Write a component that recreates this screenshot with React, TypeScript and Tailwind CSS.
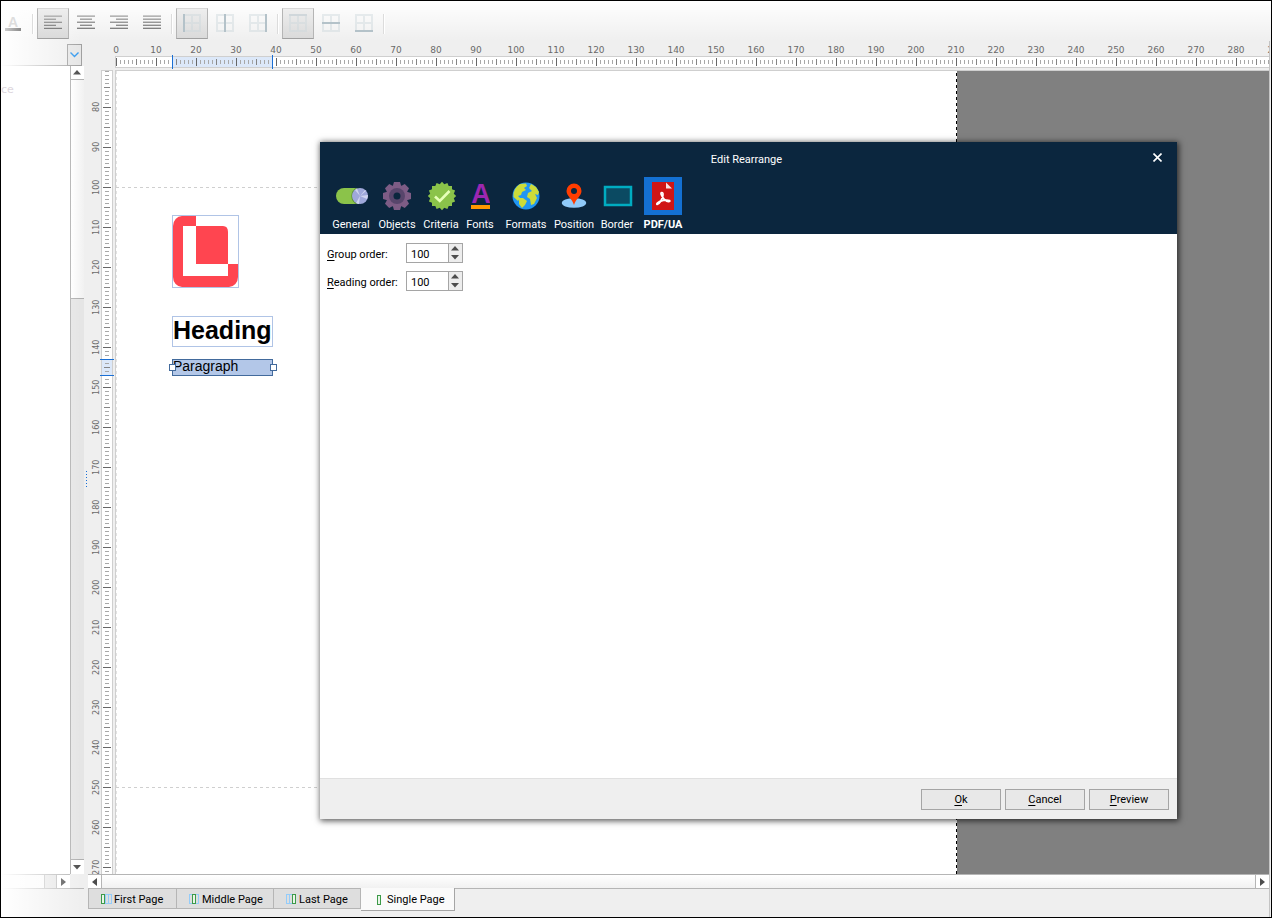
import type { ReactNode } from "react";
import clsx from "clsx";

const range = (start: number, count: number) =>
  Array.from({ length: count }, (_, i) => start + i * 10);

/* ===== Toolbar ===== */

function ToolButton({ label, pressed, children }: { label: string; pressed?: boolean; children: ReactNode }) {
  return (
    <button
      type="button"
      aria-label={label}
      aria-pressed={!!pressed}
      className={clsx(
        "flex h-[31px] w-8 justify-center border pt-[5px]",
        pressed ? "border-[#b5b5b5] border-t-[#d8d8d8] border-b-[#a0a0a0] bg-linear-to-b from-[#eeeeee] to-[#dadada]" : "border-transparent"
      )}
    >
      {children}
    </button>
  );
}

function Separator() {
  return (
    <div className="flex w-2 justify-center">
      <div className="h-5 w-0.5 border-r border-white bg-[#dcdcdc]" />
    </div>
  );
}

const lineTones = ["#b4b4b4", "#a6a6a6", "#989898", "#8c8c8c", "#808080"];

function AlignIcon({ kind }: { kind: "left" | "center" | "right" | "full" }) {
  return (
    <svg width="18" height="18" viewBox="0 0 18 18" shapeRendering="crispEdges">
      {lineTones.map((dark, i) => {
        const w = kind === "full" || i % 2 === 0 ? 18 : 12;
        const x = kind === "center" ? (18 - w) / 2 : kind === "right" ? 18 - w : 0;
        return (
          <g key={i}>
            <rect x={x} y={1 + i * 3} width={w} height="1" fill="#cbcbcb" />
            <rect x={x} y={2 + i * 3} width={w} height="1" fill={dark} />
          </g>
        );
      })}
    </svg>
  );
}

function GridIcon({ bar }: { bar: [number, number, number, number] }) {
  const [x, y, width, height] = bar;
  return (
    <svg width="18" height="18" viewBox="0 0 18 18" shapeRendering="crispEdges">
      <path d="M1 1H17V17H1Z M9 1V17 M1 9H17" fill="none" stroke="#cdd6db" strokeOpacity=".45" strokeWidth="2" />
      <rect x={x} y={y} width={width} height={height} fill={height === 2 && y === 0 ? "#d0d7db" : "#b4c2c9"} />
    </svg>
  );
}

function Toolbar() {
  return (
    <header className="relative z-10 flex h-10 shrink-0 items-center pt-[5px]">
      <button type="button" aria-label="Font color" className="flex w-7 flex-col items-center pr-1 font-['Liberation_Sans'] text-sm leading-3 font-bold text-[#dedede]">
        A
        <span className="h-[3px] w-4 bg-linear-to-r from-[#ccc] to-[#8a8a8a]" />
      </button>
      <Separator />
      <div className="flex gap-px">
        <ToolButton label="Align left" pressed><AlignIcon kind="left" /></ToolButton>
        <ToolButton label="Align center"><AlignIcon kind="center" /></ToolButton>
        <ToolButton label="Align right"><AlignIcon kind="right" /></ToolButton>
        <ToolButton label="Justify"><AlignIcon kind="full" /></ToolButton>
      </div>
      <Separator />
      <div className="flex gap-px">
        <ToolButton label="Left edge" pressed><GridIcon bar={[0, 0, 2, 18]} /></ToolButton>
        <ToolButton label="Middle"><GridIcon bar={[8, 0, 2, 18]} /></ToolButton>
        <ToolButton label="Right edge"><GridIcon bar={[16, 0, 2, 18]} /></ToolButton>
      </div>
      <Separator />
      <div className="flex gap-px">
        <ToolButton label="Top edge" pressed><GridIcon bar={[0, 0, 18, 2]} /></ToolButton>
        <ToolButton label="Vertical middle"><GridIcon bar={[0, 8, 18, 2]} /></ToolButton>
        <ToolButton label="Bottom edge"><GridIcon bar={[0, 16, 18, 2]} /></ToolButton>
      </div>
      <Separator />
    </header>
  );
}

/* ===== Scrollbars ===== */

const arrows = {
  up: "M0 4.5H8L4 0Z",
  down: "M0 0H8L4 4.5Z",
  left: "M5 0V8L0 4Z",
  right: "M0 0V8L5 4Z",
};

function Arrow({ dir }: { dir: keyof typeof arrows }) {
  const flat = dir === "up" || dir === "down";
  return (
    <svg width={flat ? 8 : 5} height={flat ? 5 : 8} className="fill-[#4d4d4d]">
      <path d={arrows[dir]} />
    </svg>
  );
}

function ScrollButton({ dir, className }: { dir: keyof typeof arrows; className: string }) {
  return (
    <button type="button" aria-label={`Scroll ${dir}`} className={clsx("flex shrink-0 items-center justify-center bg-white", className)}>
      <Arrow dir={dir} />
    </button>
  );
}

/* ===== Left panel ===== */

function SidePanel() {
  return (
    <aside className="flex w-[83px] shrink-0 flex-col">
      <div className="mr-[14px] flex h-[25px] shrink-0 border-b border-[#a8a8a8]" />
      <button type="button" aria-label="Choose" className="-mt-[22px] mr-0.5 flex h-[22px] w-[15px] shrink-0 items-center justify-center self-end border border-[#a0a0a0] bg-[#e6e6e6]">
        <svg width="9" height="6" fill="none" stroke="#2f97ee" strokeWidth="1.4"><path d="M.5 .5L4.5 4.5L8.5 .5" /></svg>
      </button>
      <div className="flex min-h-0 flex-1">
        <div className="min-w-0 flex-1 bg-white pt-4">
          <span className="relative z-10 font-['DejaVu_Sans'] text-[11px] text-[#ddd6dd]">ce</span>
        </div>
        <div className="flex w-[14px] flex-col border-l border-[#b0b0b0]">
          <ScrollButton dir="up" className="h-[14px] border-b border-[#b0b0b0] pr-0.5" />
          <div className="min-h-0 flex-[218] bg-linear-to-r from-white to-[#f1f1f1]" />
          <div className="min-h-0 flex-[561] border-y border-[#b0b0b0] bg-[#e5e5e5]" />
          <ScrollButton dir="down" className="h-[14px] pr-0.5" />
        </div>
      </div>
      <div className="flex h-[15px] shrink-0 border-b border-[#bbb]">
        <div className="flex w-[69px] border-t border-[#b5b5b5] bg-[#fafafa]">
          <div className="flex-1" />
          <div className="w-[13px] border-x border-[#bbb] bg-[#e5e5e5]" />
          <ScrollButton dir="right" className="w-[13px]" />
        </div>
      </div>
      <div className="h-7 shrink-0" />
    </aside>
  );
}

function Splitter() {
  return (
    <div className="flex w-1 shrink-0 flex-col items-center justify-center gap-px">
      {[0, 1, 2, 3, 4, 5].map((i) => (
        <i key={i} className="mb-px h-px w-px bg-[#1a6fd4]" />
      ))}
    </div>
  );
}

/* ===== Rulers ===== */

const steps = [0, 1, 2, 3, 4, 5, 6, 7, 8, 9];

// distance of a tick from the edge of the ten pixel wide strip
const inset = (i: number) => (i === 0 ? 1 : i === 5 ? 2 : 3);
const tone = (i: number) => (i === 0 ? "#666" : i === 5 ? "#858585" : "#a8a8a8");

function TopRuler() {
  return (
    <div className="flex h-[29px] shrink-0 flex-col">
      <div className="flex h-[15px] overflow-hidden pl-2 font-['DejaVu_Sans'] text-[9px] leading-[18px] text-[#6a6a6a]">
        {range(0, 30).map((n) => (
          <span key={n} className="w-10 shrink-0 text-center">{n}</span>
        ))}
      </div>
      <div className="relative ml-[27px] h-3 border-y border-l border-[#cfcfcf] bg-white">
        <svg width="100%" height="10" className="block" shapeRendering="crispEdges">
          <defs>
            <pattern id="ticks-x" width="40" height="10" patternUnits="userSpaceOnUse">
              {steps.map((i) => (
                <rect key={i} x={i * 4} y={inset(i)} width="1" height={10 - inset(i) * 2} fill={tone(i)} />
              ))}
            </pattern>
          </defs>
          <rect x="56" width="101" height="10" fill="#dce8f9" />
          <rect width="100%" height="10" fill="url(#ticks-x)" />
        </svg>
        <div className="absolute -top-0.5 left-14 h-[14px] w-[101px] border-x border-[#1a6fd4]" />
      </div>
    </div>
  );
}

function SideRuler() {
  return (
    <div className="flex w-[27px] shrink-0 overflow-hidden">
      <div className="w-[13px] overflow-hidden pt-[17px]">
        {range(80, 20).map((n) => (
          <div key={n} className="flex h-10 items-center pl-0.5 font-['DejaVu_Sans_Condensed','DejaVu_Sans'] text-[9px] leading-3 text-[#6a6a6a]">
            <span className="flex h-10 rotate-180 items-center justify-center [writing-mode:vertical-rl]">{n}</span>
          </div>
        ))}
      </div>
      <div className="relative w-3 border-x border-t border-[#cfcfcf] bg-white">
        <svg width="10" height="100%" className="block" shapeRendering="crispEdges">
          <defs>
            <pattern id="ticks-y" y="36" width="10" height="40" patternUnits="userSpaceOnUse">
              {steps.map((i) => (
                <rect key={i} x={inset(i)} y={i * 4} width={10 - inset(i) * 2} height="1" fill={tone(i)} />
              ))}
            </pattern>
          </defs>
          <rect y="288" width="10" height="17" fill="#dce8f9" />
          <rect width="10" height="100%" fill="url(#ticks-y)" />
        </svg>
        <div className="absolute top-72 -left-0.5 h-[17px] w-[14px] border-y border-[#1a6fd4]" />
      </div>
    </div>
  );
}

/* ===== Design surface ===== */

function Handle({ className }: { className: string }) {
  return <span className={clsx("absolute top-1 h-[7px] w-[7px] border border-[#426a9c] bg-white", className)} />;
}

function Canvas() {
  return (
    <div className="relative min-w-0 flex-1 overflow-hidden border-t border-l border-[#cfcfcf] bg-[#808080]">
      <div className="relative h-full w-[841px] bg-white">
        <svg width="841" height="100%" className="absolute inset-0" shapeRendering="crispEdges">
          <path d="M.5 0V2000" stroke="#e2e2e2" strokeDasharray="3 3" />
          <path d="M0 116.5H840M0 716.5H840" stroke="#cfcfcf" strokeDasharray="3 3" />
          <path d="M840.5 2V2000" stroke="#000" strokeDasharray="3 3" />
        </svg>

        <div className="absolute top-36 left-14 h-[73px] w-[67px] border border-[#b0c4e6]">
          <svg width="65" height="71" fill="#ff4550">
            <path d="M9 0H23V10H10V60H55V48H65V61A9 10 0 0 1 56 71H9A9 10 0 0 1 0 61V10A9 10 0 0 1 9 0Z" />
            <path d="M23 10H50Q55 10 55 16V48H23Z" />
          </svg>
        </div>

        <div className="absolute top-[245px] left-14 h-[31px] w-[101px] border border-[#b0c4e6] font-['Liberation_Sans'] text-[25px] leading-[27px] font-bold text-black">
          Heading
        </div>

        <div className="absolute top-72 left-14 h-[17px] w-[101px] border border-[#426a9c] bg-[#b3c7e8] font-['Liberation_Sans'] text-sm leading-3 text-black">
          Paragraph
          <Handle className="-left-1" />
          <Handle className="-right-[5px]" />
        </div>
      </div>
    </div>
  );
}

/* ===== Page tabs ===== */

function PageIcon({ blue, green }: { blue: number[]; green: number }) {
  return (
    <svg width="12" height="11" fill="none" shapeRendering="crispEdges">
      {blue.map((x) => (
        <rect key={x} x={x + 0.5} y=".5" width="3" height="9" stroke="#94ccfa" />
      ))}
      <rect x={green + 0.5} y=".5" width="3" height="9" fill="#e9f5e9" stroke="#3d9a48" />
    </svg>
  );
}

const pages = [
  { name: "First Page", width: "w-[88px]", blue: [4, 7], green: 0 },
  { name: "Middle Page", width: "w-[97px]", blue: [0, 6], green: 3 },
  { name: "Last Page", width: "w-[87px]", blue: [0, 3], green: 6 },
];

function PageTabs() {
  return (
    <nav className="flex h-7 shrink-0 items-start">
      <div className="flex border-l border-[#b5b5b5]">
        {pages.map((page) => (
          <button
            key={page.name}
            type="button"
            className={clsx("flex h-5 items-center gap-px border-r border-b border-[#b5b5b5] bg-[#dedede] pt-0.5 pl-3 whitespace-nowrap text-black", page.width)}
          >
            <PageIcon blue={page.blue} green={page.green} />
            {page.name}
          </button>
        ))}
      </div>
      <button
        type="button"
        aria-current="page"
        className="relative -mt-px flex h-[23px] w-[94px] items-center gap-px border-r border-b border-[#a5a5a5] bg-[#fafafa] pt-0.5 pl-[13px] whitespace-nowrap text-black"
      >
        <PageIcon blue={[]} green={3} />
        Single Page
      </button>
    </nav>
  );
}

/* ===== Dialog icons ===== */

function GeneralIcon() {
  return (
    <svg width="34" height="34" viewBox="-1 0 34 34">
      <rect x="1" y="9" width="26" height="16" rx="8" fill="#8bc34a" />
      <path d="M22 9A8.500 8.500 0 0 0 22 25Z" fill="#558b2f" />
      <circle cx="25" cy="17" r="8" fill="#9fa8da" />
      <path d="M25 17L20 11A8 8 0 0 1 22 9.500ZM25 17L33 16A8 8 0 0 1 32 20ZM25 17L24 25A8 8 0 0 1 21 24ZM25 17L30 11L31 12Z" fill="#d0d4f0" />
    </svg>
  );
}

function ObjectsIcon() {
  return (
    <svg width="34" height="34" viewBox="0 0 34 34">
      <g fill="#7d5c85">
        <circle cx="17" cy="17" r="11" />
        {[0, 45, 90, 135, 180, 225, 270, 315].map((a) => (
          <path key={a} d="M12.500 8L14 3H20L21.500 8Z" transform={`rotate(${a} 17 17)`} />
        ))}
      </g>
      <circle cx="17" cy="17" r="8" fill="#57456b" />
      <circle cx="17" cy="17" r="3.500" fill="#0b263e" />
    </svg>
  );
}

// sixteen pointed seal
const seal = Array.from({ length: 32 }, (_, i) => {
  const r = i % 2 ? 12 : 14.2;
  const a = (i * Math.PI) / 16;
  return `${(17 + r * Math.sin(a)).toFixed(1)},${(17 - r * Math.cos(a)).toFixed(1)}`;
}).join(" ");

function CriteriaIcon() {
  return (
    <svg width="34" height="34" viewBox="-1 0 34 34">
      <polygon points={seal} fill="#8bc34a" />
      <path d="M10 17.500L14.800 22L24.500 12" fill="none" stroke="#e6ffb8" strokeWidth="2.600" />
    </svg>
  );
}

function FontsIcon() {
  return (
    <svg width="20" height="34" viewBox="0 0 20 34" aria-hidden="true">
      <text x="11" y="24" textAnchor="middle" className="fill-[#9c27b0] font-['Liberation_Sans'] text-[27px] font-bold">A</text>
      <rect x="1" y="26" width="19" height="4" fill="#ff9800" />
    </svg>
  );
}

function FormatsIcon() {
  return (
    <svg width="34" height="34" viewBox="0 0 34 34">
      <circle cx="17" cy="17" r="13.500" fill="#2196f3" />
      <path d="M11 5L17 4.500L18 7L15 9L17 11L13 13L12 16L9 17L11 19L9 22L4.500 18A13.500 13.500 0 0 1 11 5Z" fill="#cddc39" />
      <path d="M10 19L14 19L18 22L16 26L13 29L10 25Z" fill="#cddc39" />
      <path d="M22 5L27 8L30 13L29 16L26 15L28 19L25 25L22 26L21 20L18 18L19 14L23 12L20 9Z" fill="#cddc39" />
    </svg>
  );
}

function PositionIcon() {
  return (
    <svg width="34" height="34" viewBox="0 0 34 34">
      <ellipse cx="17" cy="24" rx="12.200" ry="4.800" fill="#90caf9" />
      <path d="M17 26C15.500 20 9.500 17 9.500 12A7.500 7.500 0 0 1 24.500 12C24.500 17 18.500 20 17 26Z" fill="#ff3d00" />
      <circle cx="17" cy="12" r="3" fill="#0b263e" />
    </svg>
  );
}

function BorderIcon() {
  return (
    <svg width="34" height="34" viewBox="0 0 34 34">
      <rect x="5" y="8" width="26" height="18" fill="#0b4a62" stroke="#00acc1" strokeWidth="2.500" />
    </svg>
  );
}

function PdfIcon() {
  return (
    <svg width="38" height="38" viewBox="0 0 38 38">
      <path d="M8 5H30V33H8Z" fill="#d01515" />
      <path d="M22 5.500L28 11.500H22Z" fill="#f8e0e0" />
      <path d="M17.800 15.500C20 15.500 19 20.500 16.500 24.500C14 28.500 11.500 28 13.500 25.800C16 23.500 23 22.500 25.500 23.500C27 24.800 23 25.500 20 22C17.500 19 16 15.500 17.800 15.500Z" fill="none" stroke="#fff" strokeWidth="1.700" />
    </svg>
  );
}

/* ===== Dialog ===== */

const sections = [
  { name: "General", width: "w-[46px]", icon: <GeneralIcon /> },
  { name: "Objects", width: "w-[46px]", icon: <ObjectsIcon /> },
  { name: "Criteria", width: "w-[42px]", icon: <CriteriaIcon /> },
  { name: "Fonts", width: "w-9", icon: <FontsIcon /> },
  { name: "Formats", width: "w-14", icon: <FormatsIcon /> },
  { name: "Position", width: "w-10", icon: <PositionIcon /> },
  { name: "Border", width: "w-[46px]", icon: <BorderIcon /> },
  { name: "PDF/UA", width: "w-[46px]", icon: <PdfIcon />, active: true },
];

function OrderField({ id, hotkey, label }: { id: string; hotkey: string; label: string }) {
  return (
    <div className="flex h-5 items-center">
      <label htmlFor={id} className="w-[79px] pt-1 whitespace-nowrap">
        <u className="underline-offset-2">{hotkey}</u>{label}
      </label>
      <div className="flex h-5 w-[57px] border border-[#a5a5a5] bg-white">
        <input id={id} type="text" defaultValue="100" className="min-w-0 flex-1 pt-1 pl-1 outline-none" />
        <div className="flex w-[14px] flex-col border-l border-[#a5a5a5] bg-[#ededed]">
          <button type="button" aria-label="Increase" className="flex flex-1 items-center justify-center pr-px"><Arrow dir="up" /></button>
          <button type="button" aria-label="Decrease" className="flex flex-1 items-center justify-center pr-px"><Arrow dir="down" /></button>
        </div>
      </div>
    </div>
  );
}

function DialogButton({ label }: { label: string }) {
  return (
    <button type="button" className="h-[21px] w-20 border border-[#a5a5a5] bg-[#e8e8e8] pt-0.5">
      <u className="underline-offset-2">{label[0]}</u>{label.slice(1)}
    </button>
  );
}

function RearrangeDialog() {
  return (
    <div
      role="dialog"
      aria-label="Edit Rearrange"
      className="absolute top-[141px] right-[94px] bottom-[98px] left-[319px] z-20 flex flex-col bg-white text-black shadow-[1px_1px_6px_1px_rgba(0,0,0,0.65)]"
    >
      <div className="h-[92px] shrink-0 bg-[#0b263e] text-white">
        <div className="flex h-[35px] items-center">
          <h1 className="flex-1 pl-7 text-center">Edit Rearrange</h1>
          <button type="button" aria-label="Close" className="flex w-8 justify-center pr-2 pb-1">
            <svg width="9" height="9" stroke="#fff" strokeWidth="1.600"><path d="M.5 .5L8.500 8.500M8.500 .5L.5 8.500" /></svg>
          </button>
        </div>
        <nav className="flex pl-2">
          {sections.map((s) => (
            <button key={s.name} type="button" className={clsx("flex flex-col items-center", s.width)}>
              <span className={clsx("flex h-[38px] w-[38px] items-center justify-center", s.active && "bg-[#1470d2]")}>{s.icon}</span>
              <span className={clsx("leading-5 whitespace-nowrap", s.active && "font-bold")}>{s.name}</span>
            </button>
          ))}
        </nav>
      </div>
      <form className="flex flex-1 flex-col gap-2 px-[7px] pt-[9px]">
        <OrderField id="group-order" hotkey="G" label="roup order:" />
        <OrderField id="reading-order" hotkey="R" label="eading order:" />
      </form>
      <footer className="flex h-[41px] shrink-0 items-center justify-end gap-1 border-t border-[#e0e0e0] bg-[#efefef] pr-2">
        <DialogButton label="Ok" />
        <DialogButton label="Cancel" />
        <DialogButton label="Preview" />
      </footer>
    </div>
  );
}

export default function App() {
  return (
    <div className="relative flex h-screen flex-col overflow-hidden border border-black bg-[#efefef] font-['Roboto',sans-serif] text-[11px] leading-4">
      <Toolbar />
      <div className="flex min-h-0 flex-1">
        <SidePanel />
        <Splitter />
        <main className="mr-px flex min-w-0 flex-1 flex-col border-r border-[#c4c4c4]">
          <TopRuler />
          <div className="flex min-h-0 flex-1">
            <SideRuler />
            <Canvas />
          </div>
          <div className="flex h-[15px] shrink-0 border-y border-[#b5b5b5]">
            <ScrollButton dir="left" className="w-[14px] border-r border-[#b5b5b5]" />
            <div className="flex-1 bg-linear-to-b from-white to-[#f1f1f1]" />
            <ScrollButton dir="right" className="w-[14px] border-l border-[#b5b5b5]" />
          </div>
          <PageTabs />
        </main>
      </div>
      {/* soft white edges */}
      <div className="pointer-events-none absolute inset-y-0 left-0 w-20 bg-linear-to-r from-white to-transparent" />
      <div className="pointer-events-none absolute inset-x-0 top-0 h-10 bg-linear-to-b from-white to-transparent" />
      <RearrangeDialog />
    </div>
  );
}
